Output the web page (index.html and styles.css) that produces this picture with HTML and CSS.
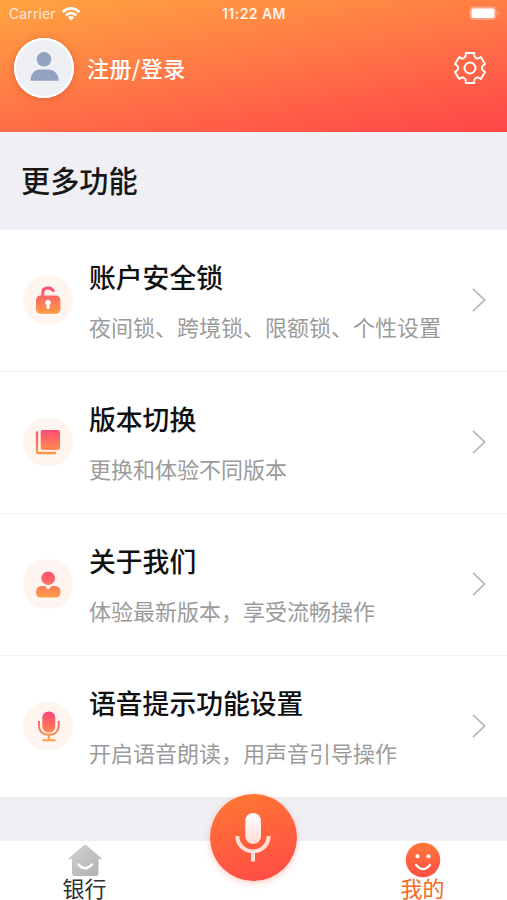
FILE: index.html
```html
<!DOCTYPE html>
<html lang="zh-CN">
<head>
<meta charset="utf-8">
<title>我的</title>
<link rel="stylesheet" href="styles.css">
</head>
<body>
<svg class="defs" width="0" height="0" aria-hidden="true">
  <defs>
    <linearGradient id="warm" gradientUnits="userSpaceOnUse" x1="0" y1="12" x2="0" y2="40"><stop offset="0" stop-color="#fb4679"/><stop offset="1" stop-color="#ffa043"/></linearGradient>
    <linearGradient id="house" x1="0" y1="0" x2="1" y2="1"><stop offset="0" stop-color="#d2d2d2"/><stop offset="1" stop-color="#b0b0b0"/></linearGradient>
    <linearGradient id="face" x1="0" y1="0" x2="0" y2="1"><stop offset="0" stop-color="#ff7838"/><stop offset="1" stop-color="#ff4e46"/></linearGradient>
    <linearGradient id="capsule" x1="0" y1="0" x2="0" y2="1"><stop offset="0" stop-color="#fff"/><stop offset="1" stop-color="#ffdcd3"/></linearGradient>
  </defs>
</svg>
<header class="header">
  <div class="status">
    <div class="carrier">
      <span>Carrier</span>
      <svg width="20" height="14" viewBox="0 0 20 14" fill="none" stroke="#fff" stroke-width="2.7"><path d="M1.7 5.1Q10-2.2 18.3 5.1"/><path d="M4.8 8.3Q10 3.9 15.2 8.3"/><path d="M6.9 10.4Q10 7.8 13.1 10.4L10 13.5Z" fill="#fff" stroke="none"/></svg>
    </div>
    <time class="clock">11:22 AM</time>
    <svg class="battery" width="32" height="15" viewBox="0 0 32 15"><rect x=".5" y=".5" width="27" height="13.5" rx="4" fill="#fff" fill-opacity=".3"/><rect x="2.5" y="2.5" width="23" height="9.5" rx="2.3" fill="#fff"/><path d="M28.7 5.2Q31 7.2 28.7 9.2Z" fill="#fff" fill-opacity=".5"/></svg>
  </div>
  <div class="profile">
    <div class="avatar"><svg width="60" height="60" viewBox="0 0 60 60" fill="#93a2bf"><circle cx="30" cy="21.3" r="7.3"/><path d="M16.5 42.7C16.5 35.5 20.5 31.5 26 31.5H34C40 31.5 44.7 35.5 44.7 42.7Z"/></svg></div>
    <a class="login">注册/登录</a>
    <svg class="gear" width="34" height="34" viewBox="0 0 34 34" fill="none" stroke="#fff" stroke-width="2" stroke-linejoin="round"><path d="M12.8 2H21.2V4.2Q21.2 6 23 7L23.6 7.3Q25 8 26.4 6.8L28 6.2L32 13L30.4 14.3Q28.8 15.2 28.8 17Q28.8 18.8 30.4 19.7L32 21L28 27.8L26.4 27.2Q25 26 23.6 26.7L23 27Q21.2 28 21.2 29.8V32H12.8V29.8Q12.8 28 11 27L10.4 26.7Q9 26 7.6 27.2L6 27.8L2 21L3.6 19.7Q5.2 18.8 5.2 17Q5.2 15.2 3.6 14.3L2 13L6 6.2L7.6 6.8Q9 8 10.4 7.3L11 7Q12.8 6 12.8 4.2Z"/><circle cx="17" cy="17" r="5.5"/></svg>
  </div>
</header>
<h1 class="heading">更多功能</h1>
<main class="list">
  <a class="item">
    <svg class="icon" viewBox="0 0 52 52"><circle class="disc" cx="26" cy="26" r="25"/><path d="M20.8 21V18.8Q20.8 14 26 14Q29.5 14 31.3 16.7" fill="none" stroke="url(#warm)" stroke-width="3" stroke-linecap="round"/><rect x="14" y="21.5" width="24.4" height="18.3" rx="4.5" fill="url(#warm)"/><path d="M26 26a2.6 2.6 0 0 1 1.5 4.7l-.5 3.8h-2l-.5-3.8a2.6 2.6 0 0 1 1.5-4.7Z" fill="#fff" stroke="#fff" stroke-width=".6"/></svg>
    <div class="copy"><h2>账户安全锁</h2><p>夜间锁、跨境锁、限额锁、个性设置</p></div>
    <svg class="chevron" viewBox="0 0 14 24"><path d="M1 .8L12.8 12L1 23.2"/></svg>
  </a>
  <a class="item">
    <svg class="icon" viewBox="0 0 52 52"><circle class="disc" cx="26" cy="26" r="25"/><rect x="18.7" y="14" width="19.3" height="20" rx="2" fill="url(#warm)"/><path d="M15 16.5V35.2Q15 37 17 37H33" fill="none" stroke="url(#warm)" stroke-width="2.3" stroke-linecap="round"/></svg>
    <div class="copy"><h2>版本切换</h2><p>更换和体验不同版本</p></div>
    <svg class="chevron" viewBox="0 0 14 24"><path d="M1 .8L12.8 12L1 23.2"/></svg>
  </a>
  <a class="item">
    <svg class="icon" viewBox="0 0 52 52"><circle class="disc" cx="26" cy="26" r="25"/><circle cx="26.2" cy="20.3" r="6.8" fill="url(#warm)"/><path d="M19.5 28H22.5L26.2 31.6L30 28H33Q38.5 28.3 38.5 34Q38.5 39.5 34 39.5H18.5Q14 39.5 14 34Q14 28.3 19.5 28Z" fill="url(#warm)"/></svg>
    <div class="copy"><h2>关于我们</h2><p>体验最新版本，享受流畅操作</p></div>
    <svg class="chevron" viewBox="0 0 14 24"><path d="M1 .8L12.8 12L1 23.2"/></svg>
  </a>
  <a class="item">
    <svg class="icon" viewBox="0 0 52 52"><circle class="disc" cx="26" cy="26" r="25"/><rect x="20.3" y="11.5" width="13" height="21" rx="6.3" fill="url(#warm)"/><path d="M17 21V26Q17.3 34.8 26.8 34.8Q36.3 34.8 36.7 26V21M26.8 35V40.2M20.5 40.2H33.5" fill="none" stroke="url(#warm)" stroke-width="2"/></svg>
    <div class="copy"><h2>语音提示功能设置</h2><p>开启语音朗读，用声音引导操作</p></div>
    <svg class="chevron" viewBox="0 0 14 24"><path d="M1 .8L12.8 12L1 23.2"/></svg>
  </a>
</main>
<nav class="tabs">
  <a class="tab">
    <svg width="36" height="34" viewBox="0 0 36 34"><path d="M17.2 1Q18.2 .3 19.2 1L34.7 14.5Q35 16 33 15.3L31.5 14.4V29Q31.5 32 28.5 32H8Q5 32 5 29V14.4L3.3 15.5Q.7 16.2 1.5 14.5Z" fill="url(#house)"/><path d="M11.5 20.5Q18 28 25 20.5" fill="none" stroke="#fff" stroke-width="2.5" stroke-linecap="round"/></svg>
    <span>银行</span>
  </a>
  <a class="tab active">
    <svg width="36" height="36" viewBox="0 0 36 36"><circle cx="18" cy="18" r="17.3" fill="url(#face)"/><g fill="#fff"><circle cx="12.5" cy="14.3" r="2.1"/><circle cx="23.5" cy="14.3" r="2.1"/></g><path d="M11 22.8Q18 31.5 25 22.8" fill="none" stroke="#fff" stroke-width="2.2" stroke-linecap="round"/></svg>
    <span>我的</span>
  </a>
  <button class="voice" aria-label="语音"><svg width="87" height="87" viewBox="0 0 87 87"><rect x="35.3" y="19" width="15.7" height="31" rx="7.8" fill="url(#capsule)"/><path d="M27.3 42A15.7 15.4 0 0 0 58.7 42M43 57.4V67.5" fill="none" stroke="#ffe0d8" stroke-width="4"/></svg></button>
</nav>
</body>
</html>
```

FILE: styles.css
```css
* { box-sizing: border-box; }
body {
  margin: 0;
  width: 507px;
  height: 900px;
  display: flex;
  flex-direction: column;
  overflow: hidden;
  background: #efeff4;
  font-family: "Noto Sans CJK SC", sans-serif;
}
h1, h2, p { margin: 0; }
.defs { position: absolute; }

.header {
  height: 132px;
  flex: none;
  color: #fff;
  background: linear-gradient(170deg, #ffa440 0%, #ff7646 50%, #ff4549 100%);
}
.status {
  height: 27px;
  padding: 0 6px 0 9px;
  display: grid;
  grid-template-columns: 1fr auto 1fr;
  align-items: center;
  font: 14px/27px Inter, sans-serif;
}
.carrier { display: flex; align-items: center; gap: 5px; color: #ffe9dc; letter-spacing: .1px; }
.clock { margin-right: 2px; font-size: 14px; font-weight: 600; letter-spacing: .45px; color: #fff3ea; }
.battery { justify-self: end; }
.profile { display: flex; align-items: center; padding: 11px 20px 0 14px; }
.avatar {
  width: 60px;
  height: 60px;
  border-radius: 50%;
  background: #eef0f4;
  box-shadow: inset 0 0 0 2px #fff, 0 1px 7px rgba(160, 60, 20, .35);
}
.avatar svg { display: block; }
.login { flex: 1; margin: -2px 0 0 13px; font-size: 22px; line-height: 32px; font-weight: 500; letter-spacing: .4px; }

.heading {
  height: 98px;
  flex: none;
  padding-left: 21px;
  font-size: 29.2px;
  line-height: 94px;
  font-weight: 500;
  color: #171717;
}

.list { flex: none; background: #fff; }
.item {
  height: 142px;
  display: flex;
  align-items: center;
  padding: 0 21px 2px 22px;
  border-bottom: 1px solid #f3f3f3;
}
.item:last-child { height: 141px; border: 0; }
.icon { width: 52px; height: 52px; flex: none; }
.disc { fill: #fff5f0; }
.copy { flex: 1; margin-left: 15px; }
.copy h2 { font-size: 26.8px; line-height: 40px; font-weight: 500; color: #111; }
.copy p { margin-top: 12px; font-size: 22px; line-height: 34px; color: #9b9b9b; white-space: nowrap; }
.chevron { width: 14px; height: 24px; flex: none; fill: none; stroke: #b9b9b9; stroke-width: 1.8; }

.tabs {
  position: relative;
  height: 59px;
  margin-top: 44px;
  flex: none;
  display: flex;
  justify-content: space-between;
  background: #fff;
}
.tab {
  width: 169px;
  display: flex;
  flex-direction: column;
  align-items: center;
  color: #303030;
  font-size: 22px;
  line-height: 24px;
}
.tab svg { margin-top: 3px; height: 34px; flex: none; }
.tab span { margin-top: -3px; }
.active { color: #f36b25; }
.active svg { margin-top: 1px; height: 36px; }
.voice {
  position: absolute;
  left: 210px;
  top: -47px;
  width: 87px;
  height: 87px;
  padding: 0;
  border: 0;
  border-radius: 50%;
  background: linear-gradient(165deg, #ff7932, #ff4948);
  box-shadow: 0 2px 7px rgba(255, 90, 60, .3);
}
.voice svg { display: block; }
```
